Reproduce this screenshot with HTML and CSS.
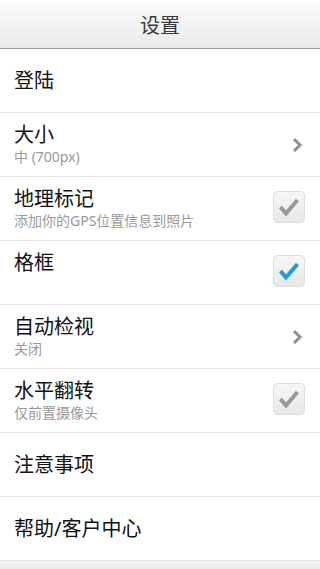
FILE: index.html
```html
<!DOCTYPE html>
<html lang="zh-CN">
<head>
    <meta charset="UTF-8">
    <meta name="viewport" content="width=device-width, initial-scale=1.0">
    <title>设置</title>
    <link rel="stylesheet" href="styles.css">
</head>
<body>

    <header class="topbar">
        <h1>设置</h1>
    </header>

    <ul class="settings">
        <li class="item">
            <div class="texts">
                <div class="title">登陆</div>
            </div>
        </li>
        <li class="item">
            <div class="texts">
                <div class="title">大小</div>
                <div class="sub">中 (700px)</div>
            </div>
            <svg class="chevron" width="12" height="16" viewBox="0 0 12 16">
                <path d="M3 2 L9 8 L3 14" fill="none" stroke="#8f8f8f" stroke-width="3"/>
            </svg>
        </li>
        <li class="item">
            <div class="texts">
                <div class="title">地理标记</div>
                <div class="sub">添加你的GPS位置信息到照片</div>
            </div>
            <div class="check">
                <svg width="30" height="30" viewBox="0 0 30 30">
                    <path d="M6.5 15 L12 21.5 L23.5 8" fill="none" stroke="#999" stroke-width="4"/>
                </svg>
            </div>
        </li>
        <li class="item">
            <div class="texts">
                <div class="title">格框</div>
                <div class="sub">&nbsp;</div>
            </div>
            <div class="check">
                <svg width="30" height="30" viewBox="0 0 30 30">
                    <path d="M6.5 15 L12 21.5 L23.5 8" fill="none" stroke="#1a9de6" stroke-width="4"/>
                </svg>
            </div>
        </li>
        <li class="item">
            <div class="texts">
                <div class="title">自动检视</div>
                <div class="sub">关闭</div>
            </div>
            <svg class="chevron" width="12" height="16" viewBox="0 0 12 16">
                <path d="M3 2 L9 8 L3 14" fill="none" stroke="#8f8f8f" stroke-width="3"/>
            </svg>
        </li>
        <li class="item">
            <div class="texts">
                <div class="title">水平翻转</div>
                <div class="sub">仅前置摄像头</div>
            </div>
            <div class="check">
                <svg width="30" height="30" viewBox="0 0 30 30">
                    <path d="M6.5 15 L12 21.5 L23.5 8" fill="none" stroke="#999" stroke-width="4"/>
                </svg>
            </div>
        </li>
        <li class="item">
            <div class="texts">
                <div class="title">注意事项</div>
            </div>
        </li>
        <li class="item">
            <div class="texts">
                <div class="title">帮助/客户中心</div>
            </div>
        </li>
    </ul>

    <div class="bottom"></div>

</body>
</html>
```

FILE: styles.css
```css
body {
    font-family: "Noto Sans", "Noto Sans CJK SC", sans-serif;
    margin: 0;
    padding: 0;
    background: #fff;
    color: #111;
}
.topbar {
    height: 48px;
    border-bottom: 1px solid #9a9a9a;
    background: linear-gradient(#fdfdfd, #e9e9e9);
    display: flex;
    align-items: center;
    justify-content: center;
}
.topbar h1 {
    margin: 0;
    font-size: 20px;
    font-weight: normal;
    color: #3a3a3a;
}
.settings {
    list-style: none;
    margin: 0;
    padding: 0;
}
.item {
    height: 63px;
    border-bottom: 1px solid #e6e6e6;
    display: flex;
    align-items: center;
    padding: 0 16px 0 14px;
}
.texts {
    flex: 1;
}
.title {
    font-size: 20px;
    line-height: 26px;
}
.sub {
    font-size: 14px;
    line-height: 20px;
    color: #999;
    margin-top: -1px;
}
.chevron {
    margin-right: 1px;
}
.check {
    width: 30px;
    height: 30px;
    border: 1px solid #dedede;
    border-radius: 4px;
    background: linear-gradient(#f6f6f6, #e8e8e8);
    display: flex;
    align-items: center;
    justify-content: center;
    margin: -3px -1px 0 0;
}
.bottom {
    height: 8px;
    background: linear-gradient(#f3f3f3, #e9e9e9);
}
```
